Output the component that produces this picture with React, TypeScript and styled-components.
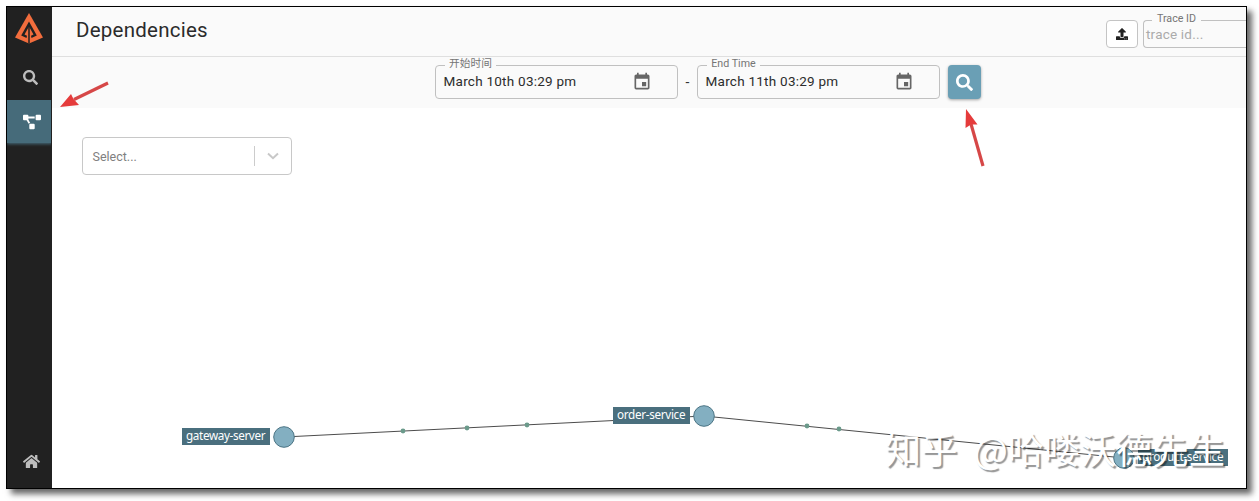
import React from "react";
import styled, { createGlobalStyle } from "styled-components";
import { FaSearch, FaProjectDiagram, FaHome, FaUpload } from "react-icons/fa";
import { MdEvent } from "react-icons/md";

const GlobalStyle = createGlobalStyle`
  * { box-sizing: border-box; }
  body { margin: 0; background: #fff; font-family: Roboto, "Noto Sans CJK SC", sans-serif; overflow: hidden; }
`;

const Page = styled.div`
  width: 1259px;
  height: 501px;
  padding: 6px;
  overflow: hidden;
`;

const Frame = styled.div`
  position: relative;
  display: flex;
  width: 1241px;
  height: 483px;
  border: 1px solid #000;
  background: #fff;
  box-shadow: 5px 5px 6px rgba(0, 0, 0, 0.6);
`;

const Sidebar = styled.nav`
  display: flex;
  flex-direction: column;
  width: 45px;
  flex: none;
  padding-bottom: 4px;
  background: #212121;
`;

const LogoSlot = styled.div`
  height: 48px;
  padding: 6px 0 0 7px;
`;

const NavItem = styled.a<{ $active?: boolean }>`
  display: flex;
  align-items: center;
  height: ${(p) => (p.$active ? 43 : 45)}px;
  padding-left: 16px;
  color: ${(p) => (p.$active ? "#fff" : "#bdbdbd")};
  background: ${(p) => (p.$active ? "#466b7a" : "transparent")};
  box-shadow: ${(p) => (p.$active ? "0 1px 3px #466b7a" : "none")};
  clip-path: inset(0 1px -4px 0);
`;

const Spacer = styled.div`
  flex: 1;
`;

const Main = styled.main`
  display: flex;
  flex-direction: column;
  flex: 1;
  min-width: 0;
  overflow: hidden;
`;

const Header = styled.header`
  display: flex;
  align-items: flex-start;
  height: 50px;
  flex: none;
  padding: 0 0 0 24px;
  background: #fafafa;
  border-bottom: 1px solid #dfdfdf;
`;

const Title = styled.h1`
  flex: 1;
  margin: 11px 0 0;
  font-size: 20.5px;
  line-height: 24px;
  font-weight: 400;
  letter-spacing: 0.25px;
  color: #2b2b2b;
`;

const UploadButton = styled.button`
  display: flex;
  align-items: center;
  justify-content: center;
  width: 32px;
  height: 28px;
  margin: 13px 5px 0 0;
  padding: 0;
  color: #212121;
  background: #fff;
  border: 1px solid #c4c4c4;
  border-radius: 4px;
`;

const Field = styled.div<{ $width: number; $height: number }>`
  position: relative;
  display: flex;
  align-items: center;
  width: ${(p) => p.$width}px;
  height: ${(p) => p.$height}px;
  border: 1px solid #c0c0c0;
  border-radius: 4px;
`;

const TraceField = styled(Field)`
  margin-top: 13px;
  padding-left: 2px;
  border-right: 0;
  border-radius: 4px 0 0 4px;
  font-size: 13.5px;
  letter-spacing: 0.2px;
  color: #ababab;
`;

const DateField = styled(Field)`
  padding: 0 25px 2px 7.5px;
  justify-content: space-between;
  font-size: 13.5px;
  letter-spacing: 0.25px;
  color: #2c2c2c;
  svg { margin-top: 2px; color: #666; }
`;

const Label = styled.span<{ $left: number; $width: number }>`
  position: absolute;
  top: -9px;
  left: ${(p) => p.$left}px;
  width: ${(p) => p.$width}px;
  height: 12px;
  text-align: center;
  white-space: nowrap;
  font-size: 10.7px;
  line-height: 13px;
  letter-spacing: 0;
  color: #757575;
  background: #fafafa;
`;

const FilterBar = styled.section`
  display: flex;
  align-items: flex-start;
  height: 51px;
  flex: none;
  padding: 8px 0 0 383px;
  background: #fafafa;
`;

const Dash = styled.span`
  width: 19px;
  text-align: center;
  font-size: 14px;
  line-height: 34px;
  color: #333;
`;

const SearchButton = styled.button`
  display: flex;
  align-items: center;
  justify-content: center;
  width: 33px;
  height: 34px;
  margin-left: 8px;
  padding: 0;
  border: 0;
  border-radius: 4px;
  color: #fff;
  background: #6a9fb5;
  box-shadow: 0 1px 3px rgba(0, 0, 0, 0.35);
`;

const Content = styled.section`
  flex: 1;
  padding: 29px 30px;
`;

const Select = styled.div`
  display: flex;
  align-items: center;
  width: 210px;
  height: 38px;
  padding-left: 9.5px;
  border: 1px solid #c8c8c8;
  border-radius: 4px;
  font-size: 12.5px;
  color: #808080;
`;

const SelectText = styled.span`
  flex: 1;
`;

const SelectArrow = styled.span`
  display: flex;
  align-items: center;
  justify-content: center;
  width: 37px;
  height: 20px;
  border-left: 1px solid #ccc;
`;

const Overlay = styled.svg`
  position: absolute;
  top: -7px;
  left: -7px;
  pointer-events: none;
`;

const NodeLabel = styled.text`
  font-family: "Noto Sans", "Open Sans", sans-serif;
  font-size: 11.7px;
  fill: #fff;
`;

const Watermark = styled.div`
  position: absolute;
  top: 419px;
  left: 878px;
  white-space: nowrap;
  font-family: "Noto Sans CJK SC", sans-serif;
  font-size: 36.2px;
  word-spacing: 8px;
  line-height: 44px;
  color: #fff;
  text-shadow: 2px 2px 1px rgba(0, 0, 0, 0.42);
`;

const Logo = () => (
  <svg width="30" height="32" viewBox="0 0 30 32">
    <path fill="#f26d3d" d="M15 0 29 24.500 15 30.500 1 24.500Z" />
    <path fill="#212121" d="M15 8.500 22.800 22.500 17.500 25 17 22.800 19.500 21.500 15 13.500 10.500 21.500 13 22.800 12.500 25 7.200 22.500Z" />
    <path stroke="#212121" strokeWidth="1.500" d="M15 10V30.500" />
  </svg>
);

const nodes = [
  { name: "gateway-server", x: 284, y: 437, left: 182, width: 88, top: 428 },
  { name: "order-service", x: 704, y: 416, left: 613, width: 77, top: 407 },
  { name: "product-service", x: 1124, y: 458, left: 1138, width: 90, top: 449 },
];

const particles = [[403, 431], [467, 428], [527, 425], [807, 426], [839, 429]];

const Graph = () => (
  <Overlay width="1259" height="501">
    <path d="M284 437 704 416 1124 458" fill="none" stroke="#4c4c4c" />
    {particles.map(([x, y]) => (
      <circle key={x} cx={x} cy={y} r="2.4" fill="#6b9a8b" />
    ))}
    {nodes.map((n) => (
      <g key={n.name}>
        <circle cx={n.x} cy={n.y} r="10.3" fill="#83afc1" stroke="#4c7585" />
        <rect x={n.left} y={n.top} width={n.width} height="17" fill="#4a6f7e" />
        <NodeLabel x={n.left + 4} y={n.top + 12} textLength={n.width - 8.5}>{n.name}</NodeLabel>
      </g>
    ))}
  </Overlay>
);

const Arrows = () => (
  <Overlay width="1259" height="501">
    <g stroke="#d64747" strokeWidth="3.2" fill="#e53b3b">
      <path d="M108 83 74 99.500" />
      <path d="M983 166 971 124" />
      <path stroke="none" d="M60 107 71 94 73.500 99 79 105Z" />
      <path stroke="none" d="M966 109 977.500 124.500 971 124.500 965.500 128Z" />
    </g>
  </Overlay>
);

export default function App() {
  return (
    <Page>
      <GlobalStyle />
      <Frame>
        <Sidebar>
          <LogoSlot><Logo /></LogoSlot>
          <NavItem><FaSearch size={15} /></NavItem>
          <NavItem $active><FaProjectDiagram size={18} /></NavItem>
          <Spacer />
          <NavItem><FaHome size={17} /></NavItem>
        </Sidebar>
        <Main>
          <Header>
            <Title>Dependencies</Title>
            <UploadButton><FaUpload size={12} /></UploadButton>
            <TraceField $width={103} $height={28}>
              <Label $left={8} $width={49}>Trace ID</Label>
              trace id...
            </TraceField>
          </Header>
          <FilterBar>
            <DateField $width={243} $height={34}>
              <Label $left={9} $width={51}>开始时间</Label>
              March 10th 03:29 pm
              <MdEvent size={20} />
            </DateField>
            <Dash>-</Dash>
            <DateField $width={243} $height={34}>
              <Label $left={9} $width={53}>End Time</Label>
              March 11th 03:29 pm
              <MdEvent size={20} />
            </DateField>
            <SearchButton><FaSearch size={17} /></SearchButton>
          </FilterBar>
          <Content>
            <Select>
              <SelectText>Select...</SelectText>
              <SelectArrow>
                <svg width="12" height="8" viewBox="0 0 12 8">
                  <path d="M1 1.500 6 6.200 11 1.500" fill="none" stroke="#c8c8c8" strokeWidth="2" />
                </svg>
              </SelectArrow>
            </Select>
          </Content>
        </Main>
        <Graph />
        <Arrows />
        <Watermark>知乎 @哈喽沃德先生</Watermark>
      </Frame>
    </Page>
  );
}
